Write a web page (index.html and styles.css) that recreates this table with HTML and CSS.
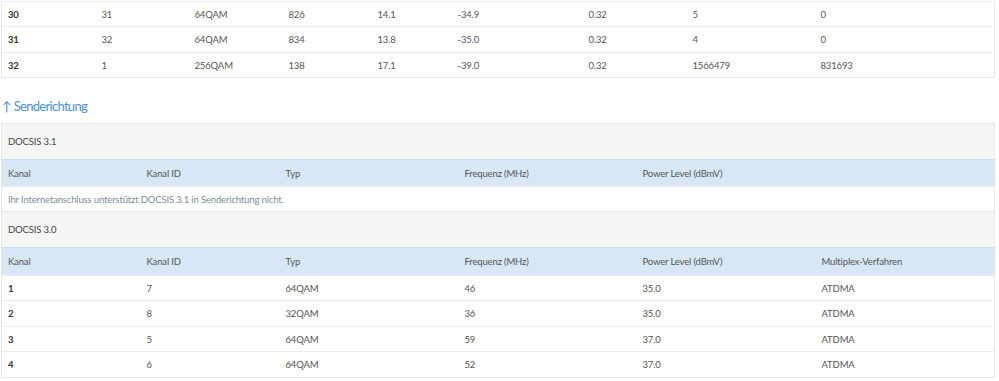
FILE: index.html
```html
<!DOCTYPE html>
<html lang="de">
<head>
<meta charset="utf-8">
<title>Kanäle</title>
<link rel="stylesheet" href="styles.css">
</head>
<body>
<div class="page">
  <table class="grid down">
    <colgroup>
      <col style="width:94px"><col style="width:93px"><col style="width:94px"><col style="width:89px"><col style="width:80px"><col style="width:131px"><col style="width:104px"><col style="width:128px"><col>
    </colgroup>
    <tbody>
      <tr><td class="k">30</td><td>31</td><td>64QAM</td><td>826</td><td>14.1</td><td>-34.9</td><td>0.32</td><td>5</td><td>0</td></tr>
      <tr><td class="k">31</td><td>32</td><td>64QAM</td><td>834</td><td>13.8</td><td>-35.0</td><td>0.32</td><td>4</td><td>0</td></tr>
      <tr><td class="k">32</td><td>1</td><td>256QAM</td><td>138</td><td>17.1</td><td>-39.0</td><td>0.32</td><td>1566479</td><td>831693</td></tr>
    </tbody>
  </table>

  <h2 class="dir">↑ Senderichtung</h2>

  <table class="grid up">
    <colgroup>
      <col style="width:139px"><col style="width:139px"><col style="width:179px"><col style="width:178px"><col style="width:179px"><col>
    </colgroup>
    <tbody>
      <tr class="section"><td colspan="6">DOCSIS 3.1</td></tr>
      <tr class="head"><td>Kanal</td><td>Kanal ID</td><td>Typ</td><td>Frequenz (MHz)</td><td>Power Level (dBmV)</td><td></td></tr>
      <tr class="note"><td colspan="6">Ihr Internetanschluss unterstützt DOCSIS 3.1 in Senderichtung nicht.</td></tr>
      <tr class="section"><td colspan="6">DOCSIS 3.0</td></tr>
      <tr class="head head-wide"><td>Kanal</td><td>Kanal ID</td><td>Typ</td><td>Frequenz (MHz)</td><td>Power Level (dBmV)</td><td>Multiplex-Verfahren</td></tr>
      <tr><td class="k">1</td><td>7</td><td>64QAM</td><td>46</td><td>35.0</td><td>ATDMA</td></tr>
      <tr><td class="k">2</td><td>8</td><td>32QAM</td><td>36</td><td>35.0</td><td>ATDMA</td></tr>
      <tr><td class="k">3</td><td>5</td><td>64QAM</td><td>59</td><td>37.0</td><td>ATDMA</td></tr>
      <tr><td class="k">4</td><td>6</td><td>64QAM</td><td>52</td><td>37.0</td><td>ATDMA</td></tr>
    </tbody>
  </table>
</div>
</body>
</html>
```

FILE: styles.css
```css
html, body {
  margin: 0;
  padding: 0;
  background: #ffffff;
}

body {
  font-family: Lato, "Open Sans", "Liberation Sans", sans-serif;
  font-size: 9.5px;
  letter-spacing: -0.15px;
  color: #555555;
}

.page {
  padding: 1px 4px 0 1px;
}

.grid {
  width: 994px;
  border-collapse: collapse;
  table-layout: fixed;
  border: 1px solid #e6e6e6;
}

.grid td {
  padding: 0 6px;
  height: 24px;
  border-top: 1px solid #ececec;
  white-space: nowrap;
  overflow: hidden;
  vertical-align: middle;
}

.grid.down tr:nth-child(2) td {
  height: 25px;
}

.grid td.k {
  font-weight: bold;
  color: #333333;
}

.dir {
  margin: 19px 0 8px 1px;
  font-size: 13px;
  letter-spacing: -0.7px;
  font-weight: normal;
  color: #4a90d9;
  line-height: 18px;
}

.section td {
  background: #f5f5f4;
  height: 35px;
  color: #444444;
  border-top: 1px solid #e6e6e6;
}

.head td {
  background: #d7e7f5;
  height: 26px;
  color: #555555;
  border-top: 1px solid #d0e0ee;
}

.head-wide td {
  height: 27px;
}

.note td {
  color: #7c8c99;
  height: 24px;
}

.grid.up tr:nth-child(7) td,
.grid.up tr:nth-child(9) td {
  height: 25px;
}
```
